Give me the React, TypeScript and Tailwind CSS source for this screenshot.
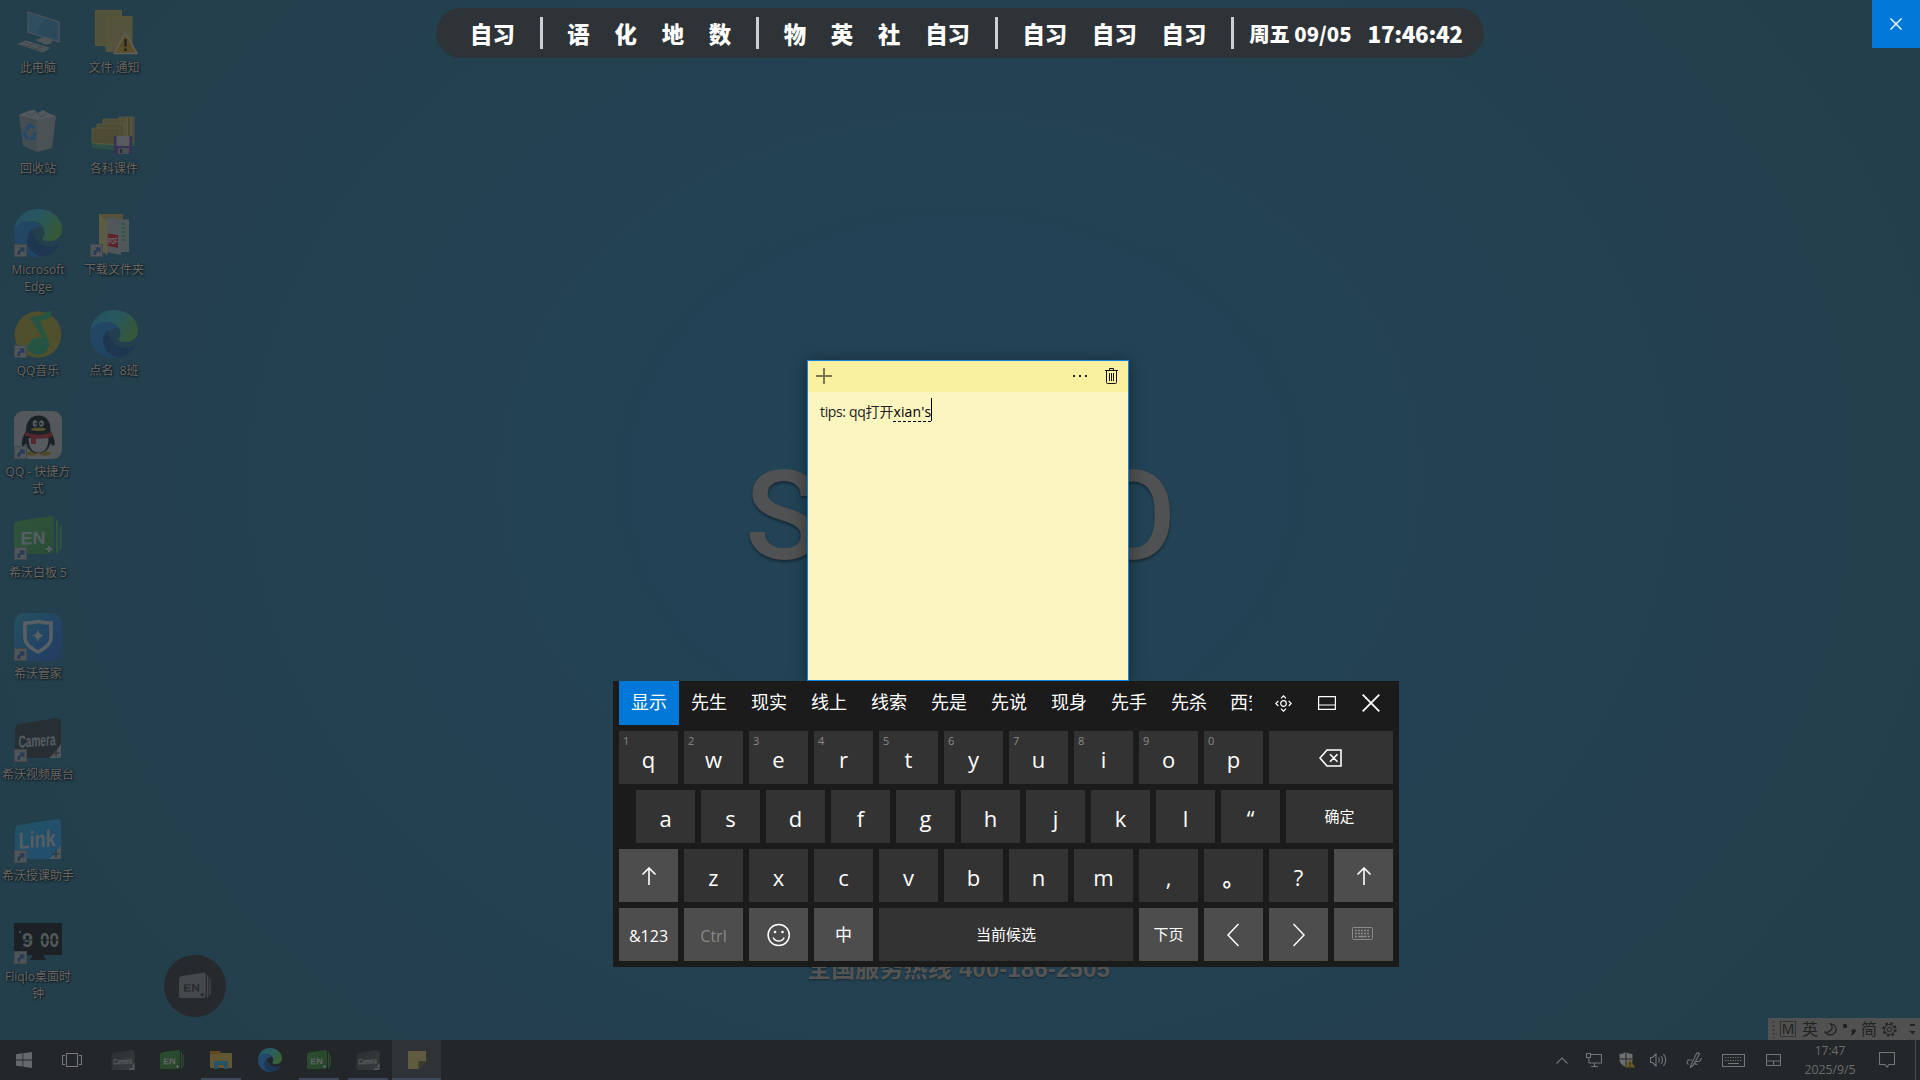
import React from "react";

const UI = "font-['Open_Sans','Noto_Sans_CJK_SC',sans-serif]";

type IconProps = { className?: string };

function ShortcutArrow() {
  return (
    <svg className="absolute bottom-0 left-0 size-[13px]" viewBox="0 0 13 13">
      <rect x="0.5" y="0.5" width="12" height="12" fill="#5c5c5c" stroke="#4a4a4a" />
      <path d="M3.5 11c-.8-3 .5-5 3-5.500L5.200 3.200h5.300v5.200L8.600 7.200c-2 .4-2.700 1.500-2.600 3.800z" fill="#2c3c57" />
    </svg>
  );
}

function PcIcon() {
  return (
    <svg viewBox="0 0 48 48" className="size-12">
      <path d="M14 5l31 10v20L14 25z" fill="#2c4c5f" stroke="#5a5c5e" strokeWidth="1.200" />
      <path d="M15 6l16 5.200L22 27l-7-2.400z" fill="#315366" />
      <path d="M21 33l9-3 9 2-2 5-6 .5z" fill="#565a5c" />
      <path d="M3 37l9-3.500 24 7.500-7 4.500z" fill="#5d5f60" />
      <path d="M7 37.500l22 6M10 35.500l22 6M12 41l8-5M20 43l8-4" stroke="#3c4548" strokeWidth="0.700" />
    </svg>
  );
}

function BinIcon() {
  return (
    <svg viewBox="0 0 48 48" className="size-12">
      <path d="M5 7l9-4 6-1 4 3 5-3 7 4 6 2-5 5-18 3-12-4z" fill="#5f6163" />
      <path d="M5 7l18 5v32L9 38z" fill="#4c5254" />
      <path d="M23 12l19-4-4 32-15 4z" fill="#545759" />
      <path d="M12 5l6 3 4-4 5 5 6-3" stroke="#4b4e50" fill="none" />
      <path d="M12 22l4-5 4 3M21 24l-1 6-4 1M14 31l-4-5 1-3" stroke="#234d70" strokeWidth="3.200" fill="none" />
    </svg>
  );
}

function EdgeIcon({ className = "size-12", id }: IconProps & { id: string }) {
  return (
    <svg viewBox="0 0 48 48" className={className}>
      <defs>
        <linearGradient id={id + "a"} x1="0" y1="0.200" x2="1" y2="0.600">
          <stop offset="0" stopColor="#24566a" />
          <stop offset="0.500" stopColor="#2a5f62" />
          <stop offset="1" stopColor="#3c5f30" />
        </linearGradient>
        <linearGradient id={id + "b"} x1="0" y1="0" x2="0.600" y2="1">
          <stop offset="0" stopColor="#234c6c" />
          <stop offset="1" stopColor="#21446a" />
        </linearGradient>
      </defs>
      <path d="M0.500 22C1 9 11 0 24 0c14 0 24 10 24 20 0 8-6 12-12 12-5 0-8-1-7.500-3 1-2 2-3 2-6C30 16 24 12 16 12 8 12 3 16 .5 22z" fill={`url(#${id}a)`} />
      <path d="M0 24C2 15 9 11.500 16 12c6 .4 10 3 12 6-7-1-13 5-12 14 1 8 6 13 13 16C12 50-1 38 0 24z" fill={`url(#${id}b)`} />
      <path d="M18 20c-6 5-6 14-2 20 5 7 12 9 19 6 4-2 8-5 10-9 0-1-.5-1.500-1.500-1C33 41 21 36 18 20z" fill="#1f3552" />
    </svg>
  );
}

function QQMusicIcon() {
  return (
    <svg viewBox="0 0 48 48" className="size-12">
      <circle cx="24" cy="24.500" r="23.300" fill="#5b5424" />
      <path d="M15.500 7.500c5-1.500 12-1 19-6L38 1l-1 5c-3 4-7 4-11 5l9 21c1 9-6 14-13 13-6-1-9-5-8-10 2-6 9-9 15-7z" fill="#275a41" />
    </svg>
  );
}

function QQIcon() {
  return (
    <svg viewBox="0 0 48 48" className="size-12">
      <rect width="48" height="48" rx="9" fill="#5f5f5f" />
      <ellipse cx="18" cy="42.500" rx="6" ry="2" fill="#5b4a1e" />
      <ellipse cx="31" cy="42.500" rx="6" ry="2" fill="#5b4a1e" />
      <path d="M12 20c-3 5-5 11-4 14.500 1 2 3-1 4-2.500 2 7 6 10 12 10s11-3 12.500-10c1 1.500 3 4 4 2 .7-3.500-1-9-4-14C37 10 32 4.500 24.500 4.500S12 10 12 20z" fill="#191b1d" />
      <path d="M14.500 27c0 9 3 14.500 10 14.500S34.500 36 34.500 27z" fill="#616161" />
      <ellipse cx="21" cy="12.500" rx="2.300" ry="3.300" fill="#636363" />
      <ellipse cx="27.500" cy="12.500" rx="2.300" ry="3.300" fill="#636363" />
      <circle cx="21.700" cy="12.800" r="1" fill="#191b1d" />
      <circle cx="27" cy="12.800" r="1" fill="#191b1d" />
      <ellipse cx="24.500" cy="18.300" rx="7.500" ry="1.800" fill="#66551d" />
      <path d="M11.500 21c8 3.500 18 3.500 26 0l.5 4.500c-5 2-11 2.500-16 2v5.500h-5v-7c-3-.5-4.500-1-6.500-2z" fill="#642227" />
    </svg>
  );
}

function SeewoCard({ className = "size-12", label, from, to, fg = "#62666a", size, tail = false }: IconProps & { label: string; from: string; to: string; fg?: string; size: number; tail?: boolean }) {
  const id = `card-${label}-${size}-${from.slice(1)}`;
  return (
    <svg viewBox="0 0 48 48" className={`overflow-visible ${className}`}>
      <defs>
        <linearGradient id={id} x1="0" y1="0" x2="1" y2="1">
          <stop offset="0" stopColor={from} />
          <stop offset="1" stopColor={to} />
        </linearGradient>
      </defs>
      {tail && <path d="M42 8l2 1v31l-2 3zM45.500 13l2 1v22l-2 3z" fill={from} />}
      <path d={tail ? "M0 14q0-4 4-5l33-5q3 0 3 3v31q0 4-4 4H3q-3 0-3-3z" : "M1 15q0-4 4-5L43 4q4 0 4 4v34q0 2-3 2H4q-3 0-3-3z"} fill={`url(#${id})`} />
      <text
        x={tail ? 19 : 23}
        y={tail ? 33 : 34}
        textAnchor="middle"
        fontSize={size}
        fontWeight="700"
        fill={fg}
        textLength={tail ? 25 : 37}
        lengthAdjust="spacingAndGlyphs"
        fontFamily="Liberation Sans, sans-serif"
        transform={tail ? "skewY(-2)" : "skewY(-4)"}
      >
        {label}
      </text>
      {tail ? (
        <path d="M35 34v6M32 37h6" stroke={fg} strokeWidth="2" />
      ) : (
        <>
          <path d="M34 44c4-1 8-7 13-14v12q0 2-3 2z" fill="#5c5f61" />
          <path d="M42 35.500v7M38.500 39h7" stroke="#33383b" strokeWidth="1.500" />
        </>
      )}
    </svg>
  );
}

function GuardIcon() {
  return (
    <svg viewBox="0 0 48 48" className="size-12">
      <defs>
        <linearGradient id="guard" x1="0" y1="0" x2="1" y2="1">
          <stop offset="0" stopColor="#255563" />
          <stop offset="0.600" stopColor="#23466b" />
          <stop offset="1" stopColor="#263a66" />
        </linearGradient>
      </defs>
      <rect width="48" height="48" rx="10" fill="url(#guard)" />
      <path d="M24 8.500c5 1.200 9 1.500 13 1.500v15c0 7-7 11-13 14-6-3-13-7-13-14V10c4 0 8-.3 13-1.500z" fill="none" stroke="#66696b" strokeWidth="3.600" />
      <path d="M24 16q1 6 6.500 6.500Q25 23 24 29q-1-6-6.500-6.500Q23 22 24 16z" fill="#66696b" />
    </svg>
  );
}

function FliqloIcon() {
  return (
    <svg viewBox="0 0 48 48" className="size-12">
      <rect y="7" width="48" height="32" fill="#1a1a1b" />
      <path d="M18 39h12v3h2v2H16v-2h2z" fill="#1a1a1b" />
      <text x="8" y="31" fontSize="21" fontWeight="700" fill="#5f6163" textLength="11" lengthAdjust="spacingAndGlyphs" fontFamily="Liberation Sans, sans-serif">9</text>
      <text x="26" y="31" fontSize="21" fontWeight="700" fill="#5f6163" textLength="19" lengthAdjust="spacingAndGlyphs" fontFamily="Liberation Sans, sans-serif">00</text>
      <path d="M8 24h12M26 24h19" stroke="#1a1a1b" />
      <circle cx="6" cy="16" r="1" fill="#5f6163" />
    </svg>
  );
}

function NoticeIcon() {
  return (
    <svg viewBox="0 0 48 48" className="size-12">
      <path d="M5.500 3.500h26v35h-26z" fill="#5d5739" stroke="#6a5c2f" />
      <path d="M16 9.500h26v35H16z" fill="#5f593b" stroke="#6a5c2f" />
      <path d="M35.500 26L47 46.500H24z" fill="#6b5220" stroke="#6d6a60" strokeWidth="1.500" strokeLinejoin="round" />
      <path d="M35.500 32v7.500M35.500 41.500v2.500" stroke="#17191a" strokeWidth="2.200" />
    </svg>
  );
}

function CoursewareIcon() {
  return (
    <svg viewBox="0 0 48 48" className="size-12">
      <path d="M2 35l26-2h17v5l-22 4L2 40z" fill="#2d5541" />
      <path d="M29 9h15v25H29z" fill="#544d2c" stroke="#6a6550" strokeWidth="0.800" />
      <path d="M37 9v24M41 10v23" stroke="#75705a" />
      <path d="M13 11h22v22H13z" fill="#5d5432" stroke="#736940" strokeWidth="0.600" />
      <path d="M7 16h27v20H7z" fill="#585131" stroke="#736940" strokeWidth="0.600" />
      <path d="M2 20h28v17L2 35z" fill="#574f2f" stroke="#736940" strokeWidth="0.600" />
      <rect x="24" y="28" width="18" height="18" fill="#3f2d59" />
      <rect x="26.500" y="28" width="13" height="10" fill="#636363" />
      <rect x="28" y="40" width="11" height="6" fill="#525456" />
      <path d="M31 41v4" stroke="#2a2530" strokeWidth="2" />
    </svg>
  );
}

function DownloadFolderIcon() {
  return (
    <svg viewBox="0 0 48 48" className="size-12">
      <path d="M9 5h24v36H9z" fill="#645632" />
      <path d="M19 10l20 .5V43H19z" fill="#5c5e5e" />
      <path d="M31.500 15h3.500M31.500 19h3.500M31.500 23h3.500M31.500 27h3.500M31.500 31h3.500" stroke="#345c46" strokeWidth="2" />
      <path d="M17 9l8-1 6 5v33l-14-3z" fill="#5b5d5e" />
      <path d="M17.500 24.500L28 26v13l-10.500-2z" fill="#6b1e20" />
      <text x="18" y="34.500" fontSize="8.500" fontWeight="700" fill="#777777" textLength="9.500" lengthAdjust="spacingAndGlyphs" fontFamily="Liberation Sans, sans-serif">PDF</text>
      <path d="M9 5l8.500 8v33L9 41z" fill="#6c6243" />
    </svg>
  );
}

const desktop: { label: string; icon: React.ReactNode; shortcut?: boolean }[] = [
  { label: "此电脑", icon: <PcIcon /> },
  { label: "回收站", icon: <BinIcon /> },
  { label: "Microsoft\nEdge", icon: <EdgeIcon id="edge-desk" />, shortcut: true },
  { label: "QQ音乐", icon: <QQMusicIcon />, shortcut: true },
  { label: "QQ - 快捷方\n式", icon: <QQIcon />, shortcut: true },
  { label: "希沃白板 5", icon: <SeewoCard label="EN" from="#355c37" to="#2b4f33" size={18} tail />, shortcut: true },
  { label: "希沃管家", icon: <GuardIcon />, shortcut: true },
  { label: "希沃视频展台", icon: <SeewoCard label="Camera" from="#2a2d2f" to="#292b2d" size={17} />, shortcut: true },
  { label: "希沃授课助手", icon: <SeewoCard label="Link" from="#225769" to="#22527a" size={23} />, shortcut: true },
  { label: "Fliqlo桌面时\n钟", icon: <FliqloIcon />, shortcut: true },
  { label: "文件,通知", icon: <NoticeIcon /> },
  { label: "各科课件", icon: <CoursewareIcon /> },
  { label: "下载文件夹", icon: <DownloadFolderIcon />, shortcut: true },
  { label: "点名  8班", icon: <EdgeIcon id="edge-call" /> },
];

function Desktop() {
  return (
    <div className="grid h-[1010px] w-[152px] grid-flow-col grid-cols-[76px_76px] grid-rows-[repeat(10,101px)]">
      {desktop.map((d) => (
        <div key={d.label} className="flex flex-col items-center pt-[7px]">
          <div className="relative size-12 opacity-80">
            {d.icon}
            {d.shortcut && <ShortcutArrow />}
          </div>
          <div className="mt-[4px] text-center text-[12px] leading-[17px] whitespace-pre text-[#696663] [text-shadow:1px_1px_2px_#0c1418,0_0_2px_#1a2227]">
            {d.label}
          </div>
        </div>
      ))}
    </div>
  );
}

function Divider() {
  return <div className="h-8 w-[3px] bg-[#cdd0d0]" />;
}

function ScheduleBar() {
  return (
    <div className="absolute top-2 left-[436px] flex h-[50px] w-[1048px] items-center rounded-full bg-[#2e3337] pl-[34px] font-['Noto_Sans_CJK_SC',sans-serif] text-[22.400px] leading-[50px] font-black text-white">
      <div className="flex items-center gap-[24.780px]">
        <span className="pb-px">自习</span>
        <Divider />
        <span className="pb-px">语</span>
        <span className="pb-px">化</span>
        <span className="pb-px">地</span>
        <span className="pb-px">数</span>
        <Divider />
        <span className="pb-px">物</span>
        <span className="pb-px">英</span>
        <span className="pb-px">社</span>
        <span className="pb-px">自习</span>
        <Divider />
        <span className="pb-px">自习</span>
        <span className="pb-px">自习</span>
        <span className="pb-px">自习</span>
        <Divider />
      </div>
      <span className="ml-[15px] pb-px text-[20.300px]">周五 09/05</span>
      <span className="ml-[16px] pb-px tracking-[-0.300px]">17:46:42</span>
    </div>
  );
}

function StickyNote() {
  return (
    <div className="absolute top-[360px] left-[807px] flex h-[321px] w-[322px] flex-col border border-[#1883d7] bg-[#fbf5bf] shadow-[0_2px_16px_rgba(0,0,0,0.4)]">
      <div className="flex h-[31px] items-center bg-[#f9f19f] pr-[10px] pb-px pl-2">
        <svg className="size-4" viewBox="0 0 16 16">
          <path d="M8 0v16M0 8h16" stroke="#000" strokeOpacity="0.500" strokeWidth="2" />
        </svg>
        <div className="ml-auto flex gap-1">
          <i className="size-[2px] bg-[#222]" />
          <i className="size-[2px] bg-[#222]" />
          <i className="size-[2px] bg-[#222]" />
        </div>
        <svg className="ml-[18px] h-4 w-[13px]" viewBox="0 0 13 16" fill="none" stroke="#111">
          <path d="M0 2.500h13M4.500 2.500v-2h4v2M1.500 2.500v12q0 1 1 1h8q1 0 1-1v-12M4.500 5v8M6.500 5v8M8.500 5v8" />
        </svg>
      </div>
      <div className="flex items-baseline pt-[6px] pl-3 text-[14px] leading-[28px] text-[#222]">
        <span className="tracking-[-0.350px]">tips: qq</span>
        <span className="text-[14px]">打开</span>
        <span className="relative tracking-[0.150px] text-black">
          xian's
          <i className="absolute right-0 bottom-[4px] left-0 border-b border-dashed border-black" />
          <i className="absolute top-0 -right-px h-[23px] w-px bg-black" />
        </span>
      </div>
    </div>
  );
}

function Key({ children, w = "w-[59px]", hint, special, small }: { children: React.ReactNode; w?: string; hint?: string; special?: boolean; small?: boolean }) {
  return (
    <div className={`relative flex h-[53px] shrink-0 items-center justify-center ${w} ${special ? "bg-[#4d4d4d]" : "bg-[#333333]"} ${small ? "text-[15px]" : "pt-[3px] text-[22px]"} text-white`}>
      {hint && <span className="absolute top-[3px] left-[4px] text-[11px] leading-[14px] text-[#8a8a8a]">{hint}</span>}
      {children}
    </div>
  );
}

function UpArrow() {
  return (
    <svg className="size-[18px]" viewBox="0 0 18 18" fill="none" stroke="#fff" strokeWidth="1.600">
      <path d="M9 18V1M2.500 7.500L9 1l6.500 6.500" />
    </svg>
  );
}

function TouchKeyboard() {
  const candidates = ["先生", "现实", "线上", "线索", "先是", "先说", "现身", "先手", "先杀"];
  return (
    <div className="absolute top-[681px] left-[613px] flex h-[286px] w-[786px] flex-col bg-[#1b1b1b] px-[6px] text-white">
      <div className="flex h-[44px] items-center">
        <div className="flex h-full w-[633px] items-center overflow-hidden text-[18px]">
          <div className="flex h-full w-[60px] shrink-0 items-center justify-center bg-[#0078d7] pb-px">显示</div>
          {candidates.map((c) => (
            <div key={c} className="w-[60px] shrink-0 pb-px text-center">{c}</div>
          ))}
          <div className="w-[33px] shrink-0 overflow-hidden pb-px pl-[11px] whitespace-nowrap">西安</div>
        </div>
        <div className="ml-auto grid grid-cols-[44px_44px_44px] place-items-center">
          <svg className="size-[17px]" viewBox="0 0 17 17" fill="none" stroke="#fff" strokeWidth="1.200">
            <circle cx="8.500" cy="8.500" r="2.800" />
            <path d="M6 3.300L8.500.8 11 3.300M6 13.700l2.500 2.500 2.500-2.500M3.300 6L.8 8.500 3.300 11M13.700 6l2.500 2.500-2.500 2.500" />
          </svg>
          <svg className="h-[14px] w-[18px]" viewBox="0 0 18 14" fill="none" stroke="#fff" strokeWidth="1.200">
            <path d="M.6.600h16.800v12.800H.6zM.6 9h16.800" />
          </svg>
          <svg className="size-[18px]" viewBox="0 0 18 18" stroke="#fff" strokeWidth="1.800">
            <path d="M.7.7l16.600 16.600M17.300.7L.7 17.300" />
          </svg>
        </div>
      </div>
      <div className="mt-[6px] flex flex-col gap-[6px]">
        <div className="flex gap-[6px]">
          {"qwertyuiop".split("").map((k, i) => (
            <Key key={k} hint={String((i + 1) % 10)}>{k}</Key>
          ))}
          <Key w="w-[124px]" small>
            <svg className="mr-px h-[18px] w-[23px]" viewBox="0 0 23 18" fill="none" stroke="#fff" strokeWidth="1.600">
              <path d="M8 1h14v16H8L1 9zM11 5.200l7.500 7.500M18.500 5.200L11 12.700" />
            </svg>
          </Key>
        </div>
        <div className="flex gap-[6px] pl-[17px]">
          {"asdfghjkl“".split("").map((k) => (
            <Key key={k}>{k}</Key>
          ))}
          <Key w="w-[107px]" small>确定</Key>
        </div>
        <div className="flex gap-[6px]">
          <Key special small><UpArrow /></Key>
          {"zxcvbnm,".split("").map((k) => (
            <Key key={k}>{k}</Key>
          ))}
          <Key><span className="pb-[3px] font-['Noto_Sans_CJK_SC'] leading-none font-bold">。</span></Key>
          <Key>?</Key>
          <Key special small><UpArrow /></Key>
        </div>
        <div className="flex gap-[6px]">
          <Key special small><span className="pt-[3px] text-[16px]">&amp;123</span></Key>
          <Key special small><span className="pt-[3px] text-[16px] text-[#888888]">Ctrl</span></Key>
          <Key special small>
            <svg className="size-6" viewBox="0 0 24 24" fill="none" stroke="#fff" strokeWidth="1.500">
              <circle cx="11.700" cy="12" r="10.600" />
              <path d="M6.200 14.500a6 6 0 0 0 11 0" />
              <circle cx="8" cy="9" r="1.300" fill="#fff" stroke="none" />
              <circle cx="15.500" cy="9" r="1.300" fill="#fff" stroke="none" />
            </svg>
          </Key>
          <Key special small><span className="text-[17px]">中</span></Key>
          <Key w="w-[254px]" small>当前候选</Key>
          <Key special small>下页</Key>
          <Key special small>
            <svg className="mr-px h-6 w-3" viewBox="0 0 12 24" fill="none" stroke="#fff" strokeWidth="1.500"><path d="M11.500 1L1 12l10.500 11" /></svg>
          </Key>
          <Key special small>
            <svg className="h-6 w-3" viewBox="0 0 12 24" fill="none" stroke="#fff" strokeWidth="1.500"><path d="M.5 1L11 12 .5 23" /></svg>
          </Key>
          <Key special small>
            <svg className="mr-[3px] mb-[3px] h-[13px] w-[21px]" viewBox="0 0 21 13" fill="none" stroke="#8a8a8a">
              <rect x="0.500" y="0.500" width="20" height="12" rx="1" />
              <path d="M3 3.500h15M3 6.500h15" strokeDasharray="2 1" strokeWidth="1.500" />
              <path d="M3 9.500h2M6 9.500h9M16 9.500h2" strokeWidth="1.500" />
            </svg>
          </Key>
        </div>
      </div>
    </div>
  );
}

function ImeBar() {
  return (
    <div className="ml-auto flex h-[22px] w-[152px] items-center bg-[#515151] pl-[4px] text-[16px] leading-[22px] text-[#222]">
      <svg className="h-[18px] w-[3px]" viewBox="0 0 3 18"><path d="M1.500 1v17" stroke="#3b3b3b" strokeWidth="2" strokeDasharray="2 2" /></svg>
      <span className="ml-[5px] flex size-4 items-center justify-center border border-[#333] text-[14px] leading-none">M</span>
      <span className="ml-[6px]">英</span>
      <svg className="ml-[6px] size-[13px]" viewBox="0 0 13 13" fill="none" stroke="#222" strokeWidth="1.200"><path d="M6.500.8q3.500 3.500 0 7Q4 10 .8 9.200q4 4.500 9 1.500Q14 7 11 3 9.500 1 6.500.8z" /></svg>
      <svg className="ml-[5px] h-[14px] w-[14px]" viewBox="0 0 14 14" fill="#222"><circle cx="3" cy="4" r="2.200" /><path d="M9.500 7.500H14q0 4-5.500 6.500l1.500-4h-.5z" /></svg>
      <span className="ml-[5px]">简</span>
      <svg className="ml-[5px] size-[15px]" viewBox="0 0 15 15" fill="none" stroke="#222">
        <circle cx="7.500" cy="7.500" r="2.200" />
        <circle cx="7.500" cy="7.500" r="5" />
        <circle cx="7.500" cy="7.500" r="6.300" strokeWidth="1.800" strokeDasharray="2.470 2.470" />
      </svg>
      <svg className="ml-[12px] h-[12px] w-[7px]" viewBox="0 0 7 12" fill="#222"><path d="M1 1h5v2H1zM.5 8h6l-3 3.500z" /></svg>
    </div>
  );
}

function TaskItem({ children, running, active }: { children: React.ReactNode; running?: boolean; active?: boolean }) {
  return (
    <div className={`relative flex h-10 w-[49px] items-center justify-center ${active ? "bg-[#2e3336]" : ""}`}>
      {children}
      {running && <div className={`absolute bottom-0 h-[2px] bg-[#3c495c] ${active ? "w-full" : "w-10"}`} />}
    </div>
  );
}

function Taskbar() {
  const s = { fill: "none", stroke: "#737577", strokeWidth: 1.1 };
  return (
    <div className="flex h-10 w-full items-center bg-[#23272a]">
      <div className="flex w-12 justify-center">
        <svg className="size-4" viewBox="0 0 16 16" fill="#66696b"><path d="M0 2.200L6.500 1.300v6.200H0zM7.300 1.200L16 0v7.500H7.300zM0 8.400h6.500v6.200L0 13.700zM7.300 8.400H16V16l-8.700-1.300z" /></svg>
      </div>
      <div className="flex w-[50px] justify-center pr-[2px]">
        <svg className="h-[14px] w-5" viewBox="0 0 20 14" {...s}><path d="M4.500.5h11v13h-11zM3 2.500H.5v9H3M17 2.500h2.500v9H17" /></svg>
      </div>
      <TaskItem><SeewoCard className="size-6" label="Camera" from="#2c2f31" to="#393c3e" fg="#5e6163" size={17} /></TaskItem>
      <TaskItem><SeewoCard className="size-6" label="EN" from="#2c4f2f" to="#27452b" size={17} tail /></TaskItem>
      <TaskItem running>
        <svg className="h-[18px] w-[22px]" viewBox="0 0 22 18"><path d="M0 0h10l1 2h11v15H0z" fill="#615735" /><path d="M0 0h10l1 2-1 1H0z" fill="#5f4a20" /><path d="M4 18v-8h14v8h-4v-4H8v4z" fill="#245368" /></svg>
      </TaskItem>
      <TaskItem><EdgeIcon className="size-6" id="edge-task" /></TaskItem>
      <TaskItem running><SeewoCard className="size-6" label="EN" from="#2c4f2f" to="#27452b" size={17} tail /></TaskItem>
      <TaskItem running><SeewoCard className="size-6" label="Camera" from="#2c2f31" to="#393c3e" fg="#5e6163" size={17} /></TaskItem>
      <TaskItem running active>
        <svg className="size-[18px]" viewBox="0 0 18 18"><path d="M0 0h18v10l-7.500 8H0z" fill="#605a40" /><path d="M10.500 10H18l-7.500 8z" fill="#3d3a2e" /></svg>
      </TaskItem>

      <div className="ml-auto flex h-full items-center">
        <svg className="h-[7px] w-3" viewBox="0 0 12 7" {...s}><path d="M.5 6.500L6 1l5.500 5.500" /></svg>
        <svg className="ml-[18px] h-[14px] w-[16px]" viewBox="0 0 16 14" {...s}><path d="M5 1.500h10.500v8.500H3V6M5 13.500h7M8.500 10v3.500M.5.500h4v4h-4zM2.500 4.500V6" /></svg>
        <svg className="ml-[17px] size-4" viewBox="0 0 16 16"><path d="M7 0q3 2 6.500 2v6q0 4-6.500 7Q.5 12 .5 8V2Q4 2 7 0z" fill="#6d6f71" /><path d="M7 0v15M.5 7h13" stroke="#23272a" /><path d="M11 7l5 8.500H6z" fill="#6b5a22" /><path d="M11 10v3M11 14v1" stroke="#222" /></svg>
        <svg className="ml-[15px] h-[14px] w-[17px]" viewBox="0 0 17 14" {...s}><path d="M.5 4.500h2L6 1v12L2.500 9.500h-2zM8.500 4.500q1.500 2.500 0 5M11 3q3 4 0 8M13.500 1q4.500 6 0 12" /></svg>
        <svg className="ml-[19px] size-4" viewBox="0 0 16 16" {...s}><path d="M5 13L10.500 1.500q2-1.500 3 .5L7 13.500l-2.500 1.800zM6 8H2.500q-3 2.500 0 4.500M9 9.500h3.500q3-1 2.500-3.500M9 9.500q-.5 4 2.500 2.500" /></svg>
        <svg className="ml-[20px] h-[13px] w-[23px]" viewBox="0 0 23 13" {...s}><path d="M.5.500h22v12H.5zM6 9.500h11" /><path d="M3 3.500h17M3 6.500h17" strokeDasharray="1.200 1.300" /></svg>
        <svg className="ml-[21px] h-[12px] w-[15px]" viewBox="0 0 15 12" {...s}><path d="M.5.500h14v11H.5zM.5 7h14M7.500 7v4.500" /></svg>
        <div className="ml-[17px] flex w-[64px] flex-col items-center text-[12px] leading-[19px] text-[#6a6c6e]">
          <span>17:47</span>
          <span className="text-[12.300px] whitespace-nowrap">2025/9/5</span>
        </div>
        <svg className="ml-[17px] size-4" viewBox="0 0 16 16" {...s}><path d="M.5.500h15v12H10L8 15l-2-2.500H.5z" /></svg>
        <div className="mr-[4px] ml-[20px] h-full w-px bg-[#484c4f]" />
      </div>
    </div>
  );
}

export default function App() {
  return (
    <div className={`relative flex h-[1080px] w-[1920px] flex-col overflow-hidden bg-[#243f4c] bg-[radial-gradient(ellipse_1000px_800px_at_960px_480px,#224459_0%,#23425500_100%)] ${UI}`}>
      <Desktop />

      <div className="absolute top-[444px] left-[745px] flex w-[431px] justify-between font-['Roboto',sans-serif] text-[125px] leading-[146px] font-medium text-[#505152] [text-shadow:0_2px_3px_rgba(0,0,0,0.4)]">
        <span>S</span>
        <span>O</span>
      </div>
      <div className="absolute top-[954px] left-[807px] font-['Liberation_Sans','Noto_Sans_CJK_SC',sans-serif] text-[24px] leading-[30px] font-bold tracking-[0.150px] whitespace-nowrap text-[#565554] [text-shadow:0_1px_2px_rgba(0,0,0,0.4)]">
        全国服务热线 400-186-2505
      </div>
      <div className="absolute top-[955px] left-[164px] flex size-[62px] items-center justify-center rounded-full bg-[#262a2d]">
        <SeewoCard className="size-8" label="EN" from="#45494c" to="#45494c" fg="#262a2d" size={16} tail />
      </div>

      <div className="mt-auto flex flex-col">
        <ImeBar />
        <Taskbar />
      </div>

      <StickyNote />
      <TouchKeyboard />
      <ScheduleBar />
      <button className="absolute top-0 right-0 flex size-12 items-center justify-center bg-[#0078d7]">
        <svg className="size-3" viewBox="0 0 12 12" stroke="#fff" strokeWidth="1.400"><path d="M.5.500l11 11M11.500.5l-11 11" /></svg>
      </button>
    </div>
  );
}
